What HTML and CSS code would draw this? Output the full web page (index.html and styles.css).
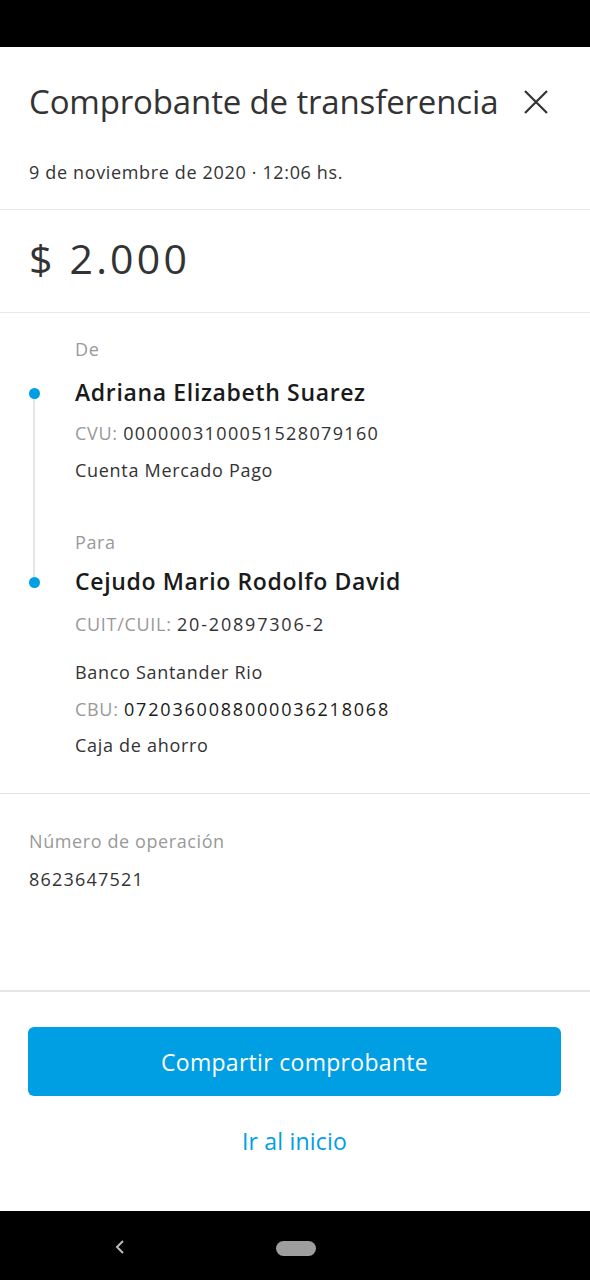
FILE: index.html
```html
<!DOCTYPE html>
<html>
	<head>
		<meta charset="UTF-8">
		<title>Comprobante de transferencia</title>
		<link rel="stylesheet" href="styles.css">
	</head>
	<body>
		<div class="status"></div>
		<div class="screen">
			<div class="header">
				<div class="title-row">
					<h1>Comprobante de transferencia</h1>
					<svg class="close" width="24" height="24" viewBox="0 0 24 24">
						<path d="M1 1 L23 23 M23 1 L1 23" stroke="#333" stroke-width="2.2" fill="none"/>
					</svg>
				</div>
				<p class="date">9 de noviembre de 2020 · 12:06 hs.</p>
			</div>

			<div class="amount">$ 2.000</div>

			<div class="parties">
				<div class="line"></div>
				<div class="party">
					<p class="label">De</p>
					<p class="name"><span class="dot"></span>Adriana Elizabeth Suarez</p>
					<p class="row first"><span class="key">CVU:</span> <span class="num cvu">0000003100051528079160</span></p>
					<p class="row">Cuenta Mercado Pago</p>
				</div>
				<div class="party to">
					<p class="label">Para</p>
					<p class="name"><span class="dot"></span>Cejudo Mario Rodolfo David</p>
					<p class="row first"><span class="key">CUIT/CUIL:</span> <span class="num">20-20897306-2</span></p>
					<p class="row bank">Banco Santander Rio</p>
					<p class="row"><span class="key">CBU:</span> <span class="num dark">0720360088000036218068</span></p>
					<p class="row tight">Caja de ahorro</p>
				</div>
			</div>

			<div class="operation">
				<p class="label">Número de operación</p>
				<p class="row op-num">8623647521</p>
			</div>

			<div class="footer">
				<a class="btn">Compartir comprobante</a>
				<a class="link">Ir al inicio</a>
			</div>
		</div>
		<div class="nav">
			<svg class="back" width="12" height="16" viewBox="0 0 12 16">
				<path d="M9 2 L3 8 L9 14" stroke="#bbb" stroke-width="2" fill="none"/>
			</svg>
			<span class="home"></span>
		</div>
	</body>
</html>
```

FILE: styles.css
```css
*{padding: 0;margin: 0;box-sizing: border-box;}
body{width: 590px;height: 1280px;background: #fff;font-family: "Open Sans", "Liberation Sans", sans-serif;color: #333;display: flex;flex-direction: column;}

.status{height: 47px;background: #000;flex: none;}
.screen{flex: 1;display: flex;flex-direction: column;}

.header{padding: 37px 29px 26px;border-bottom: 1px solid #e8e8e8;}
.title-row{display: flex;justify-content: space-between;align-items: center;height: 36px;}
.title-row h1{font-size: 33px;font-weight: 400;line-height: 36px;color: #333;letter-spacing: -0.15px;white-space: nowrap;}
.close{margin-right: 13px;flex: none;}
.date{margin-top: 41px;font-size: 18px;line-height: 22px;color: #333;letter-spacing: 0.65px;}

.amount{padding: 23px 29px 29px;font-size: 41px;line-height: 50px;letter-spacing: 3.2px;color: #333;border-bottom: 1px solid #e8e8e8;}

.parties{position: relative;padding: 25px 29px 37px 75px;border-bottom: 1px solid #e4e4e4;}
.line{position: absolute;left: 33px;top: 80px;width: 2px;height: 190px;background: #e6e6e6;}
.label{font-size: 18px;line-height: 22px;color: #999;letter-spacing: 0.6px;}
.name{position: relative;margin-top: 18px;font-size: 23px;font-weight: 600;line-height: 28px;color: #1a1a1a;letter-spacing: 0.65px;}
.to .name{margin-top: 14px;}
.dot{position: absolute;left: -46px;top: 10px;width: 11px;height: 11px;border-radius: 50%;background: #009ee3;}
.row{margin-top: 15px;font-size: 18px;line-height: 22px;color: #333;letter-spacing: 0.7px;}
.row.first{margin-top: 16px;}
.to .row.first{margin-top: 18px;}
.row.bank{margin-top: 26px;}
.row.tight{margin-top: 14px;}
.key{color: #999;}
.num{letter-spacing: 1.8px;}
.num.cvu{letter-spacing: 1.35px;}
.dark{color: #1a1a1a;}
.to{margin-top: 50px;}

.operation{padding: 36px 29px 0;height: 196px;}
.operation .row{margin-top: 16px;}
.op-num{letter-spacing: 1.2px;}

.footer{flex: 1;border-top: 2px solid #e6e6e6;padding: 35px 29px 0 28px;display: flex;flex-direction: column;align-items: center;}
.btn{display: flex;justify-content: center;align-items: center;width: 100%;height: 69px;background: #009ee3;border-radius: 6px;color: #fff;font-size: 23px;letter-spacing: 0.3px;}
.link{margin-top: 31px;font-size: 23px;line-height: 28px;color: #009ee3;letter-spacing: 0.2px;}

.nav{height: 69px;background: #000;flex: none;position: relative;}
.back{position: absolute;left: 114px;top: 28px;}
.home{position: absolute;left: 276px;top: 30px;width: 40px;height: 15px;border-radius: 8px;background: #9e9e9e;}
```
